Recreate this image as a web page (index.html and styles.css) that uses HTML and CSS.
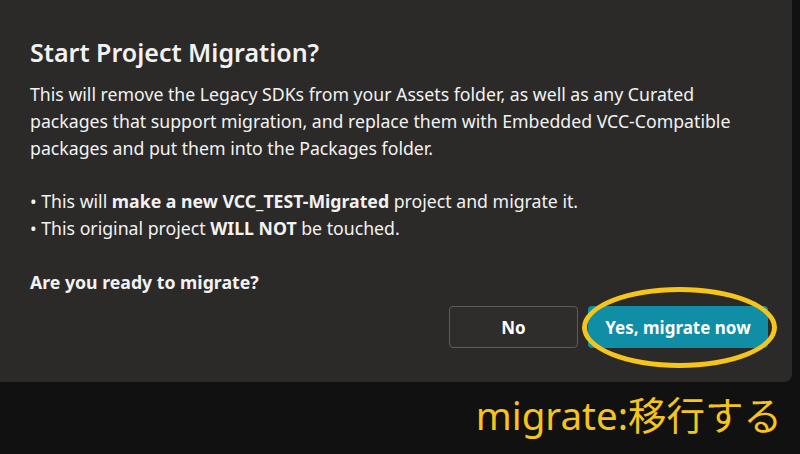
FILE: index.html
```html
<!DOCTYPE html>
<html lang="en">
<head>
    <meta charset="UTF-8">
    <meta name="viewport" content="width=device-width, initial-scale=1.0">
    <title>Start Project Migration?</title>
    <link rel="stylesheet" href="styles.css">
</head>
<body>
    <div class="dialog">
        <h2>Start Project Migration?</h2>
        <p>This will remove the Legacy SDKs from your Assets folder, as well as any Curated packages that support migration, and replace them with Embedded VCC-Compatible packages and put them into the Packages folder.</p>
        <ul class="notes">
            <li>&bull; This will <b>make a new VCC_TEST-Migrated</b> project and migrate it.</li>
            <li>&bull; This original project <b>WILL NOT</b> be touched.</li>
        </ul>
        <p class="question">Are you ready to migrate?</p>
        <div class="actions">
            <button class="btn-no">No</button>
            <div class="highlight">
                <button class="btn-yes">Yes, migrate now</button>
                <span class="ring"></span>
            </div>
        </div>
    </div>
    <div class="caption">migrate:移行する</div>
</body>
</html>
```

FILE: styles.css
```css
body {
    margin: 0;
    height: 454px;
    overflow: hidden;
    background-color: #111111;
    font-family: "Noto Sans", "Open Sans", sans-serif;
    color: #f2f2f2;
}

.dialog {
    background-color: #2b2a29;
    width: 792px;
    height: 382px;
    box-sizing: border-box;
    padding: 34px 24px 0 30px;
    border-bottom-right-radius: 8px;
}

    .dialog h2 {
        margin: 0 0 11px 0;
        font-size: 25px;
        font-weight: 600;
        line-height: 36px;
    }

    .dialog p {
        margin: 0;
        max-width: 720px;
        font-size: 17.7px;
        line-height: 27px;
    }

    .notes {
        list-style: none;
        margin: 26px 0 0 0;
        padding: 0;
        font-size: 17.7px;
        line-height: 27px;
    }

    .dialog .question {
        margin-top: 27px;
        font-weight: 700;
    }

.actions {
    display: flex;
    justify-content: flex-end;
    gap: 10px;
    margin-top: 10px;
}

    .actions button {
        height: 42px;
        border-radius: 4px;
        font-family: inherit;
        font-size: 17px;
        font-weight: 700;
        color: #ffffff;
        cursor: pointer;
    }

.btn-no {
    width: 129px;
    background-color: #2e2d2c;
    border: 1px solid #5c5c5c;
}

.btn-yes {
    width: 180px;
    background-color: #0f8ea6;
    border: none;
}

.highlight {
    position: relative;
}

.ring {
    position: absolute;
    left: -6px;
    top: -19px;
    width: 185px;
    height: 71px;
    border: 5px solid #f6c41b;
    border-radius: 50%;
}

.caption {
    text-align: right;
    padding: 8px 18px 0 0;
    font-family: "Noto Sans", "Noto Sans CJK JP", sans-serif;
    font-size: 38.5px;
    line-height: 50px;
    color: #f6c41b;
}
```
